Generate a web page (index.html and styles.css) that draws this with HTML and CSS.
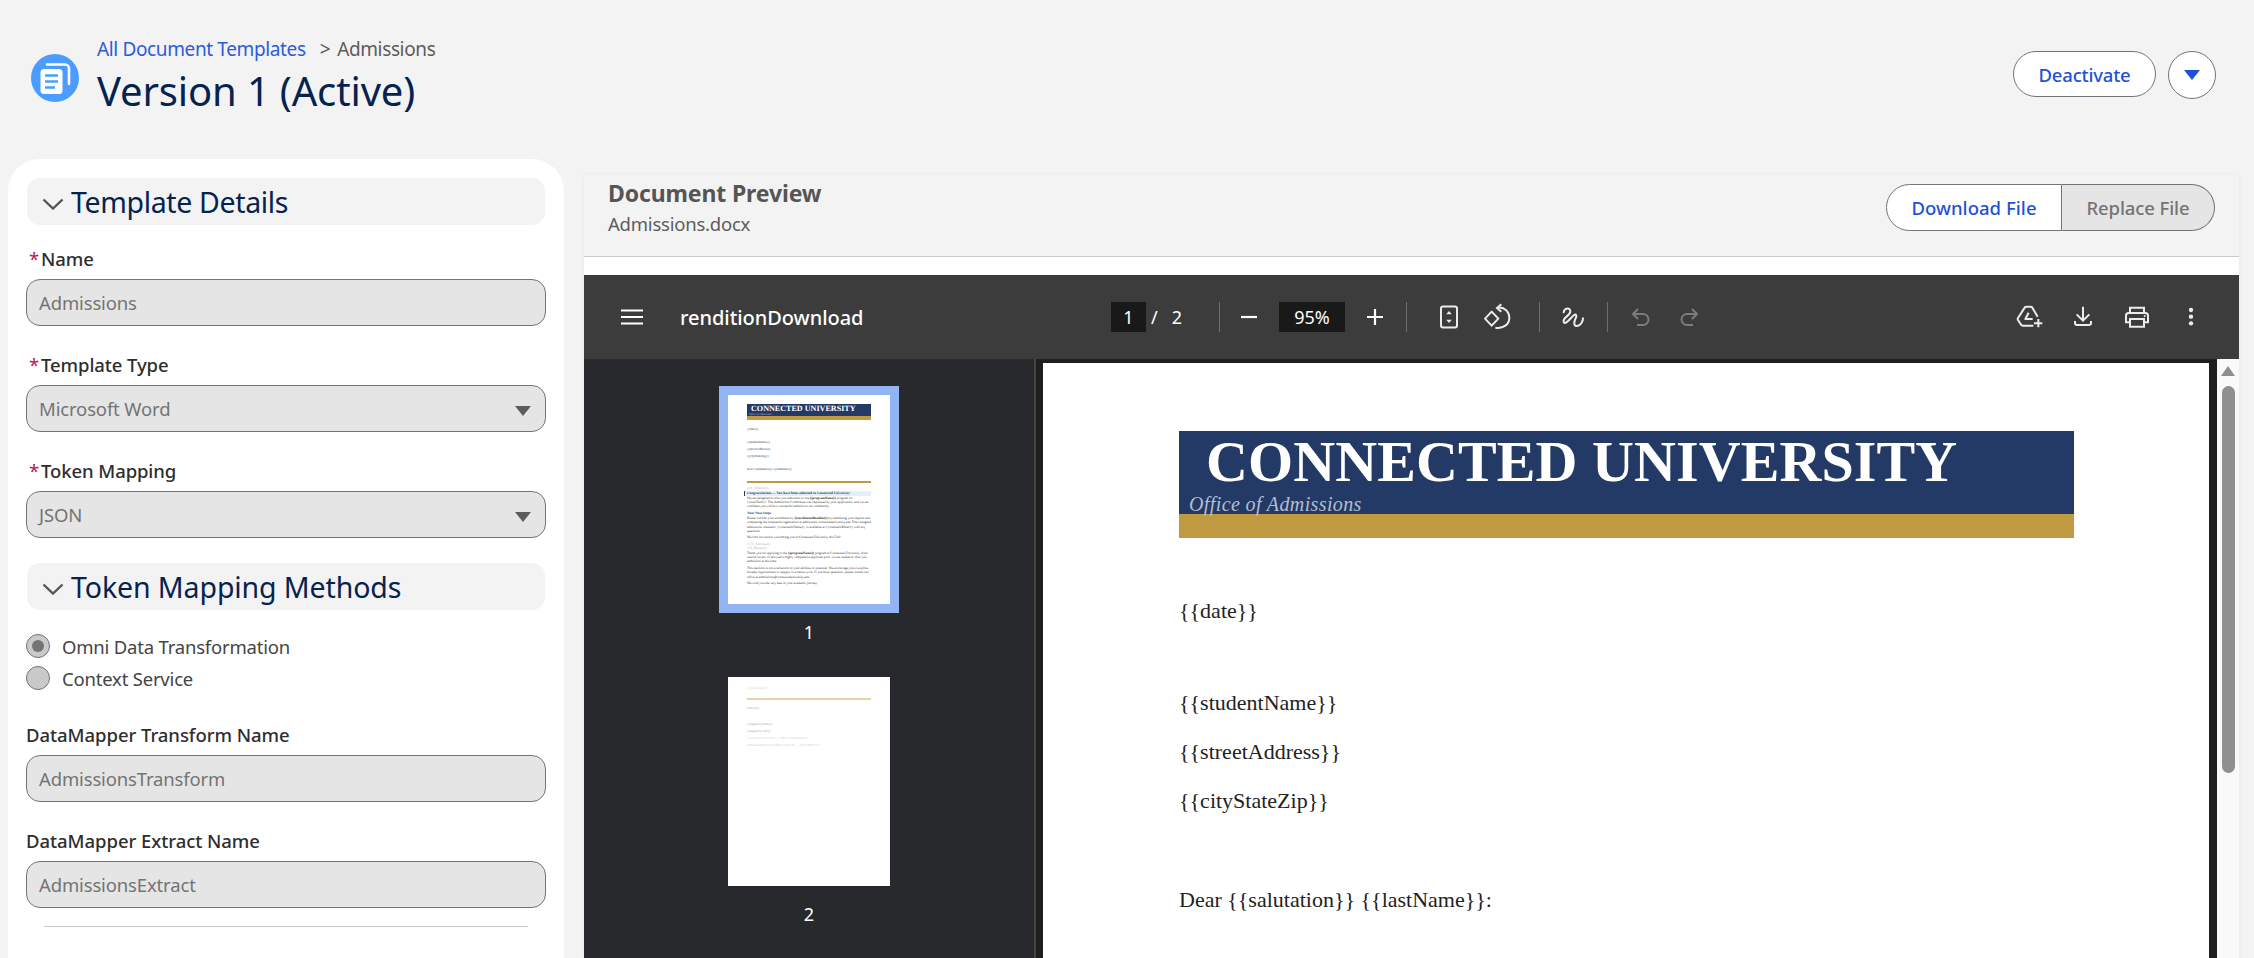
FILE: index.html
```html
<!DOCTYPE html>
<html lang="en">
<head>
<meta charset="utf-8">
<title>Version 1 (Active)</title>
<link rel="stylesheet" href="styles.css">
</head>
<body>
<div class="app">
  <header class="page-header">
    <svg class="page-icon" viewBox="0 0 48 48" aria-hidden="true">
      <circle cx="24" cy="24" r="24" fill="#4a9dff"/>
      <path d="M16 10.500h18a4 4 0 0 1 4 4V30" fill="none" stroke="#fff" stroke-width="2.600" stroke-linecap="round"/>
      <rect x="9.500" y="15" width="22" height="25" rx="3.500" fill="#fff"/>
      <path d="M14 21.500h13M14 27.500h13M14 33.500h10" stroke="#4a9dff" stroke-width="2.400" fill="none"/>
    </svg>
    <div class="title-block">
      <nav class="crumbs"><a class="crumb-link">All Document Templates</a><span class="crumb-sep">&gt;</span><span class="crumb-current">Admissions</span></nav>
      <h1 class="page-title">Version 1 (Active)</h1>
    </div>
    <div class="page-actions">
      <button class="pill-btn">Deactivate</button>
      <button class="round-btn" aria-label="More actions"><span class="caret-blue"></span></button>
    </div>
  </header>

  <main class="content">
    <aside class="side-card">
      <div class="section-head">
        <svg class="chevron" viewBox="0 0 22 12" aria-hidden="true"><path d="M1.500 1.500 11 10.500l9.500-9"/></svg>
        <h2 class="section-title">Template Details</h2>
      </div>
      <label class="field-label field-first"><span class="req">*</span>Name</label>
      <div class="field">Admissions</div>
      <label class="field-label"><span class="req">*</span>Template Type</label>
      <div class="field field-select">Microsoft Word<span class="caret-grey"></span></div>
      <label class="field-label"><span class="req">*</span>Token Mapping</label>
      <div class="field field-select">JSON<span class="caret-grey"></span></div>

      <div class="section-head section-second">
        <svg class="chevron" viewBox="0 0 22 12" aria-hidden="true"><path d="M1.500 1.500 11 10.500l9.500-9"/></svg>
        <h2 class="section-title section-title-wide">Token Mapping Methods</h2>
      </div>
      <div class="radio-row radio-first"><span class="radio radio-on"></span>Omni Data Transformation</div>
      <div class="radio-row"><span class="radio"></span>Context Service</div>

      <label class="field-label field-plain field-after-radio">DataMapper Transform Name</label>
      <div class="field">AdmissionsTransform</div>
      <label class="field-label field-plain">DataMapper Extract Name</label>
      <div class="field">AdmissionsExtract</div>
      <hr class="side-rule">
    </aside>

    <section class="preview">
      <div class="preview-head">
        <div>
          <h2 class="preview-title">Document Preview</h2>
          <div class="preview-file">Admissions.docx</div>
        </div>
        <div class="btn-group">
          <button class="group-btn group-primary">Download File</button>
          <button class="group-btn group-disabled">Replace File</button>
        </div>
      </div>

      <div class="viewer">
        <div class="toolbar">
          <div class="tb-left">
            <svg class="tb-icon tb-menu" viewBox="0 0 24 24" aria-hidden="true"><path d="M1 5.500h22M1 12h22M1 18.500h22" stroke="#fff" stroke-width="2" fill="none"/></svg>
            <span class="doc-name">renditionDownload</span>
          </div>
          <div class="tb-center">
            <span class="tb-box tb-page">1</span>
            <span class="tb-count"><span class="tb-slash">/</span><span>2</span></span>
            <span class="tb-sep"></span>
            <svg class="tb-icon tb-minus" viewBox="0 0 24 24" aria-hidden="true"><path d="M4 12h16" stroke="#fff" stroke-width="2.200"/></svg>
            <span class="tb-box tb-zoom">95%</span>
            <svg class="tb-icon tb-plus" viewBox="0 0 24 24" aria-hidden="true"><path d="M4 12h16M12 4v16" stroke="#fff" stroke-width="2.200"/></svg>
            <span class="tb-sep tb-sep2"></span>
            <svg class="tb-icon tb-fit" viewBox="0 0 24 24" aria-hidden="true"><rect x="4" y="1.500" width="16" height="21" rx="2" fill="none" stroke="#ececec" stroke-width="2"/><path d="M12 6l2.800 3.200H9.200zM12 18l-2.800-3.200h5.600z" fill="#ececec"/></svg>
            <svg class="tb-icon tb-rotate" viewBox="165 30 72 72" aria-hidden="true"><g fill="none" stroke="#ececec" stroke-width="6"><path d="M185 50 205 71 185 92 165 71z" stroke-linejoin="round"/><path d="M205 38C225 36 238 52 238 68 238 88 220 102 196 98"/><path d="M214 28 201 39 214 50"/></g></svg>
            <span class="tb-sep tb-sep3"></span>
            <svg class="tb-icon tb-ink" viewBox="393 30 72 72" aria-hidden="true"><path d="M401 52C403 38 422 36 421 50 420 62 398 68 401 80 404 92 420 72 430 62 438 54 442 62 436 72 430 84 432 96 444 92 452 90 459 80 459 70" fill="none" stroke="#ececec" stroke-width="6" stroke-linecap="round"/></svg>
            <span class="tb-sep tb-sep4"></span>
            <svg class="tb-icon tb-undo" viewBox="0 0 24 24" aria-hidden="true"><path d="M9 4 4 9l5 5M4 9h10a5.500 5.500 0 0 1 0 11H8" fill="none" stroke="#7c7c7c" stroke-width="2"/></svg>
            <svg class="tb-icon tb-redo" viewBox="0 0 24 24" aria-hidden="true"><path d="M15 4l5 5-5 5M20 9H10a5.500 5.500 0 0 0 0 11h6" fill="none" stroke="#7c7c7c" stroke-width="2"/></svg>
          </div>
          <div class="tb-right">
            <svg class="tb-icon" viewBox="21 30 72 72" aria-hidden="true"><g fill="none" stroke="#ececec" stroke-width="6"><path d="M70 92H38Q35 92 33 89L24 75Q22 72 24 69L44 38Q46 35 49 35H62Q65 35 67 38L83 65"/><path d="M56 53 46 72H68" stroke-linejoin="round"/><path d="M85 72V97M72 85H97"/></g></svg>
            <svg class="tb-icon" viewBox="183 30 72 72" aria-hidden="true"><g fill="none" stroke="#ececec" stroke-width="6"><path d="M219 35V76M200 58 219 77 238 58"/><path d="M195 78V84Q195 90 201 90H237Q243 90 243 84V78"/></g></svg>
            <svg class="tb-icon" viewBox="345 30 72 72" aria-hidden="true"><g fill="none" stroke="#ececec" stroke-width="6"><path d="M360 55V38H402V55"/><path d="M360 82H348V62Q348 54 356 54H406Q414 54 414 62V82H402"/><path d="M360 72H402V95H360Z"/></g><circle cx="404" cy="63" r="3" fill="#ececec"/></svg>
            <svg class="tb-icon" viewBox="507 30 72 72" aria-hidden="true"><g fill="#ececec"><circle cx="543" cy="45" r="6.500"/><circle cx="543" cy="65" r="6.500"/><circle cx="543" cy="85" r="6.500"/></g></svg>
          </div>
        </div>

        <div class="viewer-body">
          <div class="thumbs">
            <div class="thumb-frame thumb-selected">
              <div class="thumb-page">
                <div class="m-banner"><div class="m-uni">CONNECTED UNIVERSITY</div><div class="m-office">Office of Admissions</div></div>
                <div class="m-gold"></div>
                <p class="m-line m-date">{{date}}</p>
                <p class="m-line m-student">{{studentName}}</p>
                <p class="m-line m-addr">{{streetAddress}}</p>
                <p class="m-line m-addr">{{cityStateZip}}</p>
                <p class="m-line m-student">Dear {{salutation}} {{lastName}}:</p>
                <div class="m-rule"></div>
                <p class="m-line m-faint">{{If_Admitted}}</p>
                <p class="m-line m-congrats">Congratulations — You have been admitted to Connected University!</p>
                <p class="m-para">We are delighted to offer you admission to the <b>{{programName}}</b> program for {{startTerm}}. The Admissions Committee was impressed by your application, and we are confident you will be a wonderful addition to our community.</p>
                <p class="m-line m-steps">Your Next Steps</p>
                <p class="m-para">Please confirm your enrollment by <b>{{enrollmentDeadline}}</b> by submitting your deposit and completing the orientation registration at admissions.connecteduniversity.edu. Your assigned admissions counselor, {{counselorName}}, is available at {{counselorEmail}} with any questions.</p>
                <p class="m-para m-gap">We look forward to welcoming you to Connected University this Fall!</p>
                <p class="m-para m-faint m-gap">{{/If_Admitted}}<br>{{If_Denied}}</p>
                <p class="m-para">Thank you for applying to the <b>{{programName}}</b> program at Connected University. After careful review of this year's highly competitive applicant pool, we are unable to offer you admission at this time.</p>
                <p class="m-para m-gap">This decision is not a reflection of your abilities or potential. We encourage you to explore broader opportunities or reapply in a future cycle. If you have questions, please contact our office at admissions@connecteduniversity.edu.</p>
                <p class="m-para m-gap">We wish you the very best in your academic journey.</p>
              </div>
            </div>
            <div class="thumb-num">1</div>
            <div class="thumb-frame thumb-next">
              <div class="thumb-page">
                <p class="m-line m-pale m-top2">{{/If_Denied}}</p>
                <div class="m-rule m-rule-pale"></div>
                <p class="m-line m-grey m-sinc">Sincerely,</p>
                <p class="m-line m-grey m-sign">{{signatoryName}}</p>
                <p class="m-line m-grey m-sign2">{{signatoryTitle}}</p>
                <p class="m-line m-pale m-sign2">Connected University — Office of Admissions</p>
                <p class="m-line m-pale m-sign2">admissions@connecteduniversity.edu — (555) 000-0123</p>
              </div>
            </div>
            <div class="thumb-num">2</div>
          </div>

          <div class="doc-area">
            <article class="doc-page">
              <div class="banner">
                <div class="banner-title">CONNECTED UNIVERSITY</div>
                <div class="banner-sub">Office of Admissions</div>
              </div>
              <div class="banner-gold"></div>
              <p class="doc-line doc-date">{{date}}</p>
              <p class="doc-line doc-student">{{studentName}}</p>
              <p class="doc-line doc-addr">{{streetAddress}}</p>
              <p class="doc-line doc-addr">{{cityStateZip}}</p>
              <p class="doc-line doc-dear">Dear {{salutation}} {{lastName}}:</p>
            </article>
          </div>

          <div class="scrollbar">
            <span class="scroll-up"></span>
            <span class="scroll-thumb"></span>
          </div>
        </div>
      </div>
    </section>
  </main>
</div>
</body>
</html>
```
FILE: styles.css
```css
* { box-sizing: border-box; }
html, body { margin: 0; height: 958px; overflow: hidden; }
body { background: #f3f3f3; font-family: "Noto Sans", "Open Sans", sans-serif; color: #2e2e2e; }
h1, h2, p { margin: 0; font-weight: 400; }
button { font-family: inherit; cursor: pointer; }

.app { height: 958px; display: flex; flex-direction: column; overflow: hidden; }

/* header */
.page-header { height: 159px; flex: none; display: flex; padding: 34px 38px 0 31px; position: relative; }
.page-icon { width: 48px; height: 48px; margin-top: 20px; flex: none; }
.title-block { margin-left: 18px; }
.crumbs { font-size: 19px; line-height: 28px; margin-top: 1px; letter-spacing: -.37px; white-space: nowrap; }
.crumb-link { color: #2b5bdc; }
.crumb-sep { color: #5c5c5c; margin: 0 7px 0 14px; }
.crumb-current { color: #5c5c5c; }
.page-title { font-size: 40px; line-height: 52px; margin-top: 2px; color: #06234f; letter-spacing: -.15px; white-space: nowrap; }
.page-actions { margin-left: auto; display: flex; align-items: flex-start; gap: 12px; padding-top: 17px; }
.pill-btn { width: 143px; height: 46px; border: 1px solid #747474; border-radius: 23px; background: #fff; color: #1f51d8; font-size: 18.500px; font-weight: 500; padding: 0; letter-spacing: -.2px; }
.round-btn { width: 48px; height: 48px; border: 1px solid #747474; border-radius: 50%; background: #fff; padding: 0; display: flex; align-items: center; justify-content: center; }
.caret-blue { width: 0; height: 0; border-left: 8px solid transparent; border-right: 8px solid transparent; border-top: 10px solid #1f51d8; }

/* main */
.content { flex: 1; min-height: 0; display: flex; padding-left: 8px; }

/* left card */
.side-card { width: 556px; flex: none; background: #fff; border-radius: 32px 32px 0 0; padding: 19px 18px 0 18px; }
.section-head { height: 47px; margin: 0 1px; background: #f3f3f3; border-radius: 13px; display: flex; align-items: center; padding-left: 15px; }
.chevron { width: 22px; height: 12px; margin-top: 5px; flex: none; }
.chevron path { fill: none; stroke: #555; stroke-width: 2.400; }
.section-title { margin-left: 7px; font-size: 28.500px; color: #06234f; letter-spacing: -.35px; white-space: nowrap; }
.section-title-wide { letter-spacing: -.1px; }
.section-second { margin-top: 25px; }
.field-label { display: block; height: 28px; line-height: 28px; margin-top: 25px; font-size: 18.500px; font-weight: 500; padding-left: 3px; letter-spacing: -.1px; white-space: nowrap; }
.field-first { margin-top: 20px; }
.field-plain { padding-left: 0; letter-spacing: -.05px; }
.field-after-radio { margin-top: 31px; }
.req { color: #ba1558; font-weight: 400; margin-right: 2px; }
.field { height: 47px; border: 1px solid #747474; border-radius: 14px; background: #e5e5e5; color: #747474; font-size: 18.500px; line-height: 45px; padding-left: 12px; position: relative; letter-spacing: -.15px; margin-top: 6px; }
.caret-grey { position: absolute; right: 14px; top: 20px; width: 0; height: 0; border-left: 8px solid transparent; border-right: 8px solid transparent; border-top: 10px solid #5c5c5c; }
.radio-row { display: flex; align-items: center; height: 24px; font-size: 18.500px; color: #444; letter-spacing: -.2px; }
.radio-row + .radio-row { margin-top: 8px; }
.radio-first { margin-top: 24px; }
.radio { width: 24px; height: 24px; border: 1px solid #747474; border-radius: 50%; background: #c9c9c9; margin-right: 12px; flex: none; display: flex; align-items: center; justify-content: center; }
.radio-on::after { content: ""; width: 12px; height: 12px; border-radius: 50%; background: #747474; }
.side-rule { border: 0; border-top: 1px solid #c9c9c9; margin: 18px 18px 0 18px; }

/* preview */
.preview { width: 1655px; flex: none; margin: 16px 0 0 20px; display: flex; flex-direction: column; box-shadow: 0 0 5px rgba(0,0,0,.05); }
.preview-head { height: 82px; flex: none; border-bottom: 1px solid #c9c9c9; display: flex; padding: 4px 24px 0 24px; justify-content: space-between; }
.preview-title { font-size: 23px; line-height: 28px; font-weight: 700; color: #555; letter-spacing: -.13px; }
.preview-file { font-size: 18.500px; line-height: 28px; color: #5c5c5c; margin-top: 3px; letter-spacing: -.22px; }
.btn-group { display: flex; height: 47px; margin-top: 5px; }
.group-btn { height: 47px; border: 1px solid #747474; font-size: 18.500px; font-weight: 500; padding: 0; }
.group-primary { width: 176px; background: #fff; color: #1f51d8; border-radius: 24px 0 0 24px; letter-spacing: .05px; }
.group-disabled { width: 153px; background: #e5e5e5; color: #747474; border-left: 0; border-radius: 0 24px 24px 0; letter-spacing: -.1px; }

.viewer { flex: 1; min-height: 0; background: #fff; padding-top: 18px; display: flex; flex-direction: column; }
.toolbar { height: 84px; flex: none; background: #3c3c3c; display: flex; align-items: center; color: #fff; }
.tb-left { width: 527px; flex: none; display: flex; align-items: center; padding-left: 36px; }
.tb-icon { width: 24px; height: 24px; flex: none; display: block; overflow: visible; }
.doc-name { margin-left: 36px; font-size: 20px; font-weight: 500; letter-spacing: -.05px; }
.tb-center { display: flex; align-items: center; font-size: 18px; }
.tb-box { height: 30px; background: #191919; display: flex; align-items: center; justify-content: center; }
.tb-page { width: 35px; }
.tb-zoom { width: 66px; margin-left: 18px; }
.tb-count { width: 73px; display: flex; padding-left: 5px; gap: 14px; }
.tb-sep { width: 1px; height: 30px; background: #6e6e6e; flex: none; }
.tb-minus { margin-left: 17px; }
.tb-plus { margin-left: 18px; }
.tb-sep2 { margin-left: 19px; }
.tb-fit { margin-left: 30px; }
.tb-rotate { margin-left: 24px; }
.tb-sep3 { margin-left: 30px; }
.tb-ink { margin-left: 21px; }
.tb-sep4 { margin-left: 22px; }
.tb-undo { margin-left: 21px; }
.tb-redo { margin-left: 24px; }
.tb-right { margin-left: auto; display: flex; gap: 30px; padding-right: 36px; }

.viewer-body { flex: 1; min-height: 0; display: flex; overflow: hidden; }
.thumbs { width: 452px; flex: none; background: #28292c; border-right: 2px solid #444; padding-top: 27px; display: flex; flex-direction: column; align-items: center; }
.thumb-frame { width: 180px; height: 227px; border: 9px solid transparent; flex: none; }
.thumb-selected { border-color: #93b4f2; }
.thumb-next { margin-top: 24px; }
.thumb-page { height: 209px; background: #fff; padding: 9px 19px 0; font-family: "Liberation Serif", serif; overflow: hidden; color: #222; text-rendering: geometricPrecision; }
.thumb-num { height: 24px; line-height: 24px; margin-top: 7px; font-size: 18px; color: #fff; flex: none; }

.m-banner { height: 12px; background: #233a67; color: #fff; font-weight: 700; }
.m-uni { font-size: 8.100px; line-height: 9px; padding-left: 4px; white-space: nowrap; }
.m-office { font-size: 2.800px; line-height: 3px; padding-left: 2px; font-style: italic; font-weight: 400; color: #b6bdcf; }
.m-gold { height: 4px; background: #c09a40; }
.m-line { font-size: 3.200px; line-height: 5px; white-space: nowrap; }
.m-date { margin-top: 6.500px; }
.m-student { margin-top: 8px; }
.m-addr { margin-top: 2px; }
.m-rule { height: 1.500px; background: #c09a40; margin-top: 9.500px; }
.m-faint { color: #aaa; }
.m-line.m-faint { margin-top: 3px; }
.m-congrats { background: #e8eef8; color: #233a67; font-weight: 700; border-left: 1px solid #233a67; margin-left: -3px; padding-left: 2px; font-size: 3.500px; }
.m-para { font-size: 3.350px; line-height: 4.200px; margin-top: .5px; }
.m-gap { margin-top: 2.500px; }
.m-steps { color: #233a67; font-weight: 700; margin-top: 2px; font-size: 3.500px; }
.m-pale { color: #ccc; }
.m-grey { color: #999; }
.m-top2 { margin-top: 0; }
.m-rule-pale { background: #e6d4a8; margin-top: 7px; }
.m-sinc { margin-top: 6.500px; }
.m-sign { margin-top: 11px; }
.m-sign2 { margin-top: 2px; }

.doc-area { flex: 1; min-width: 0; background: #1f1f1f; padding: 4px 8px 0 7px; }
.doc-page { height: 600px; background: #fff; padding: 68px 135px 0 136px; font-family: "Liberation Serif", serif; color: #222; }
.banner { height: 83px; background: #233a67; padding: 0 0 0 28px; }
.banner-title { color: #fff; font-size: 58px; font-weight: 700; line-height: 58px; padding-top: 2px; white-space: nowrap; height: 62px; letter-spacing: .1px; margin-left: -1px; }
.banner-sub { color: #b6bdcf; font-style: italic; font-size: 20px; line-height: 22px; margin-left: -18px; white-space: nowrap; letter-spacing: .38px; }
.banner-gold { height: 24px; background: #c09a40; }
.doc-line { font-size: 22px; line-height: 34px; white-space: nowrap; }
.doc-date { margin-top: 56px; }
.doc-student { margin-top: 58px; }
.doc-addr { margin-top: 15px; }
.doc-dear { margin-top: 65px; }

.scrollbar { width: 22px; flex: none; background: #f9f9f9; display: flex; flex-direction: column; align-items: center; padding-top: 7px; }
.scroll-up { width: 0; height: 0; border-left: 7px solid transparent; border-right: 7px solid transparent; border-bottom: 10px solid #8f8f8f; flex: none; }
.scroll-thumb { width: 13px; height: 387px; background: #8f8f8f; border-radius: 7px; margin-top: 10px; flex: none; }
```
